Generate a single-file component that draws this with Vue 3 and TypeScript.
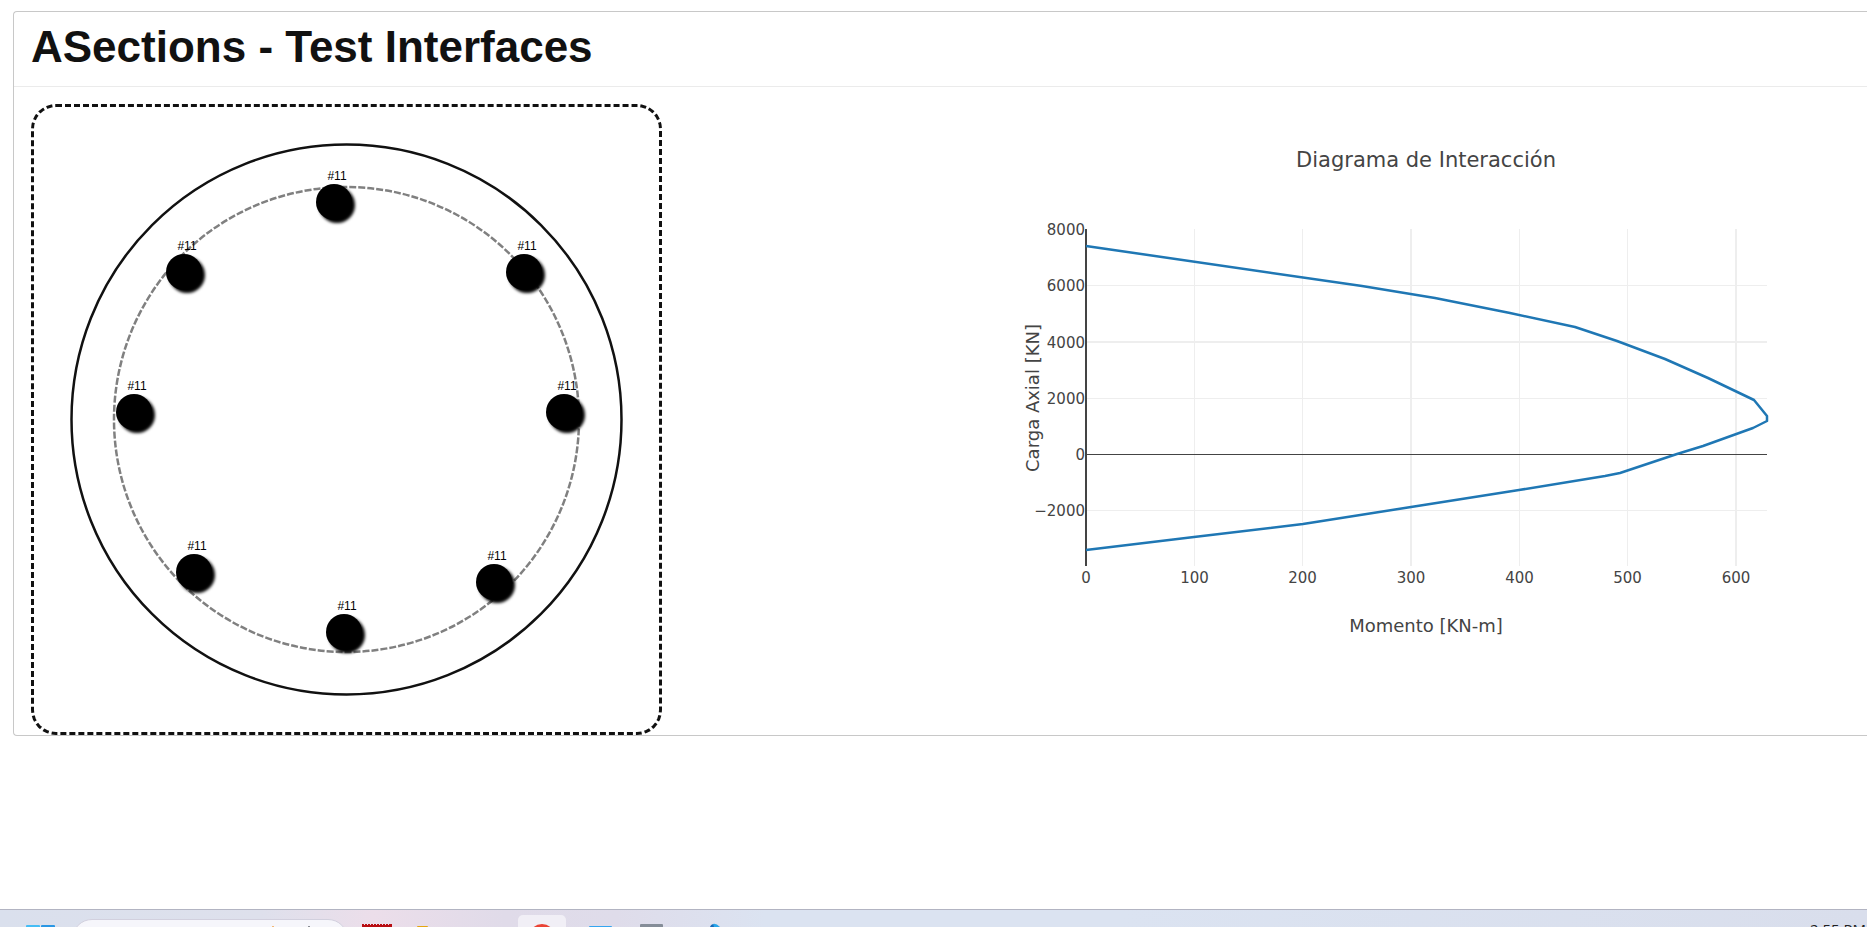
<script setup lang="ts">
interface Bar {
  x: number
  y: number
  label: string
}

const bars: Bar[] = [
  { x: 300, y: 95, label: '#11' },
  { x: 150, y: 165, label: '#11' },
  { x: 490, y: 165, label: '#11' },
  { x: 100, y: 305, label: '#11' },
  { x: 530, y: 305, label: '#11' },
  { x: 160, y: 465, label: '#11' },
  { x: 460, y: 475, label: '#11' },
  { x: 310, y: 525, label: '#11' },
]

// Plot area inside the chart, in chart units
const plot = { left: 100, right: 781, top: 125, bottom: 462 }

const xTicks = [
  { value: '0', x: 100, w: 0 },
  { value: '100', x: 208.5, w: 1 },
  { value: '200', x: 316.5, w: 1 },
  { value: '300', x: 425, w: 2 },
  { value: '400', x: 533.5, w: 1 },
  { value: '500', x: 641.5, w: 1 },
  { value: '600', x: 750, w: 2 },
]

const yTicks = [
  { value: '8000', y: 125, w: 0 },
  { value: '6000', y: 181.5, w: 1 },
  { value: '4000', y: 238, w: 2 },
  { value: '2000', y: 294.5, w: 1 },
  { value: '0', y: 350.5, w: 0 },
  { value: '−2000', y: 406.5, w: 1 },
]

const curve: [number, number][] = [
  [100, 142], [376, 182], [449, 194], [524, 209], [589, 223], [631, 237],
  [679, 255], [722, 274], [768, 296], [781, 312], [781, 317], [767, 324],
  [717, 342], [691, 350], [634, 369], [619, 372], [533, 386], [425, 403],
  [317, 420], [208, 433], [100, 446],
]
const curvePoints = curve.map((p) => p.join(',')).join(' ')
</script>

<template>
  <div class="screen">
    <main class="page">
      <section class="card">
        <header class="card-header">
          <h1>ASections - Test Interfaces</h1>
        </header>
        <div class="card-body">
          <div class="section-frame">
            <svg class="section" viewBox="0 0 625 625" role="img" aria-label="Sección circular">
              <defs>
                <filter id="barShadow" x="-30%" y="-30%" width="180%" height="180%">
                  <feDropShadow dx="3" dy="3" stdDeviation="1.5" flood-color="#000" flood-opacity="1" />
                </filter>
              </defs>
              <circle class="outer" cx="312.5" cy="312.5" r="275" />
              <circle class="inner" cx="312.5" cy="312.5" r="232.5" />
              <g v-for="(bar, i) in bars" :key="i">
                <circle :cx="bar.x" :cy="bar.y" r="18" filter="url(#barShadow)" />
                <text class="bar-label" :x="bar.x + 3" :y="bar.y - 22">{{ bar.label }}</text>
              </g>
            </svg>
          </div>

          <svg class="chart" viewBox="0 0 881 562" role="img" aria-label="Diagrama de Interacción">
            <text class="chart-title" x="440" y="63">Diagrama de Interacción</text>
            <g class="grid">
              <line v-for="t in xTicks" :key="t.value" :x1="t.x" :x2="t.x" :y1="plot.top" :y2="plot.bottom" :stroke-width="t.w" />
              <line v-for="t in yTicks" :key="t.value" :x1="plot.left" :x2="plot.right" :y1="t.y" :y2="t.y" :stroke-width="t.w" />
            </g>
            <line class="zero" :x1="plot.left" :x2="plot.right" y1="350.5" y2="350.5" stroke-width="1" />
            <line class="zero" x1="100" x2="100" :y1="plot.top" :y2="plot.bottom" stroke-width="2" />
            <polyline class="curve" :points="curvePoints" />
            <text v-for="t in xTicks" :key="t.value" class="tick" text-anchor="middle" :x="t.x" y="479">{{ t.value }}</text>
            <text v-for="t in yTicks" :key="t.value" class="tick" text-anchor="end" x="99" :y="Math.floor(t.y) + 6">{{ t.value }}</text>
            <text class="axis-title" x="440" y="528">Momento [KN-m]</text>
            <text class="axis-title" transform="translate(53 294) rotate(-90)">Carga Axial [KN]</text>
          </svg>
        </div>
      </section>
    </main>

    <footer class="taskbar">
      <button class="start" type="button" aria-label="Start">
        <svg width="30" height="2" viewBox="0 0 30 2">
          <rect width="14" height="14" rx="1" fill="#45bdf5" />
          <rect x="15" width="14" height="14" rx="1" fill="#2a97e4" />
        </svg>
      </button>
      <div class="search">
        <input type="text" aria-label="Search" />
        <svg width="54" height="1" viewBox="0 0 54 1" aria-hidden="true">
          <rect width="2" height="1" fill="#f3b878" />
          <rect x="36" width="2" height="1" fill="#8a8d94" />
        </svg>
      </div>
      <div class="apps">
        <button type="button" aria-label="App">
          <svg viewBox="0 0 48 12"><path d="M9 12V9h2v1h1V9h2v1h1V9h2v1h1V9h2v1h1V9h2v1h1V9h2v1h1V9h2v1h1V9h2v1h1V9h2v1h1V9h3v3z" fill="#b80d12" /></svg>
        </button>
        <button type="button" aria-label="File Explorer">
          <svg viewBox="0 0 48 12"><rect x="9" y="11" width="11" height="4" rx="1" fill="#e5a50f" /></svg>
        </button>
        <button type="button" aria-label="App"></button>
        <button type="button" class="active" aria-label="Chrome">
          <svg viewBox="0 0 48 12"><circle cx="24" cy="22" r="13" fill="#ea4335" /></svg>
        </button>
        <button type="button" aria-label="App">
          <svg viewBox="0 0 48 12"><rect x="16" y="11" width="23" height="4" rx="1" fill="#35a5f0" /></svg>
        </button>
        <button type="button" aria-label="App">
          <svg viewBox="0 0 48 12"><rect x="12" y="9" width="23" height="6" rx="1" fill="#858d98" /></svg>
        </button>
        <button type="button" aria-label="App">
          <svg viewBox="0 0 48 12"><path d="M27 12q1-3 4-3l1 3z" fill="#1668b8" /><path d="M30 9q3-1 7 3h-6z" fill="#27a4e8" /></svg>
        </button>
      </div>
      <time class="clock">2:55 PM</time>
    </footer>
  </div>
</template>

<style>
body {
  margin: 0;
  background: #fff;
}
</style>

<style scoped>
.screen {
  display: flex;
  flex-direction: column;
  box-sizing: border-box;
  min-height: 100vh;
  padding-bottom: 5px;
  overflow: hidden;
  color: #111;
  font-family: "Liberation Sans", Arial, sans-serif;
}

.page {
  flex: 1;
  padding: 11px 0 0 13px;
}

.card {
  border: 1px solid #c8c8c8;
  border-right: 0;
  border-radius: 4px 0 0 4px;
}

.card-header {
  padding: 9px 17px 13px;
  border-bottom: 1px solid #ebebeb;
}

h1 {
  margin: 0;
  font-size: 44px;
  line-height: 52px;
  font-weight: 700;
}

.card-body {
  display: flex;
  align-items: flex-start;
  justify-content: space-between;
  padding: 17px 0 0 17px;
}

.section-frame {
  flex: 0 1 625px;
  border: 3px dashed #111;
  border-radius: 25px;
}

.section,
.chart {
  display: block;
}

.section {
  width: 100%;
}

.outer {
  fill: none;
  stroke: #111;
  stroke-width: 2.5;
}

.inner {
  fill: none;
  stroke: #808080;
  stroke-width: 2.5;
  stroke-dasharray: 7 2;
}

.bar-label {
  fill: #000;
  font-size: 12px;
  text-anchor: middle;
}

.chart {
  flex: 0 1 881px;
  min-width: 0;
  fill: #444;
  font-family: Verdana, "DejaVu Sans", sans-serif;
}

.chart-title {
  font-size: 21px;
  text-anchor: middle;
}

.axis-title {
  font-size: 18px;
  text-anchor: middle;
}

.tick {
  font-size: 15px;
}

.grid {
  stroke: #eee;
}

.zero {
  stroke: #444;
}

.curve {
  fill: none;
  stroke: #1f77b4;
  stroke-width: 2.5;
  stroke-linejoin: round;
}

.taskbar {
  display: flex;
  align-items: flex-start;
  height: 17px;
  overflow: hidden;
  border-top: 1px solid #b2b4c2;
  background: linear-gradient(90deg, #dae0ed 0, #dee0ec 14%, #ecdeea 20%, #e0dbe9 27%, #dfdcea 33%, #dbe3f1 41%, #dbe3f1 60%, #d9deec 100%);
}

button {
  padding: 0;
  border: 0;
  background: none;
}

button svg {
  display: block;
}

.start {
  margin: 15px 0 0 26px;
}

.search {
  display: flex;
  align-items: flex-start;
  box-sizing: border-box;
  width: 276px;
  height: 40px;
  margin: 9px 0 0 16px;
  padding: 0 21px;
  border: 1px solid #d2d0de;
  border-radius: 20px;
  background: #f6f6fb;
}

.search svg {
  flex: none;
  margin-top: 6px;
}

.search input {
  flex: 1;
  min-width: 0;
  border: 0;
  outline: 0;
  background: none;
}

.apps {
  display: flex;
  gap: 7px;
  margin: 5px 0 0 5px;
}

.apps button {
  display: flex;
  align-items: flex-start;
  width: 48px;
  height: 48px;
  border-radius: 5px;
}

.apps svg {
  width: 48px;
  height: 12px;
}

.apps .active {
  background: #f1eff6;
}

.clock {
  margin: 9px 1px 0 auto;
  color: #222;
  font-family: "Open Sans", "Noto Sans", sans-serif;
  font-size: 15px;
  line-height: 20px;
  white-space: nowrap;
}
</style>
